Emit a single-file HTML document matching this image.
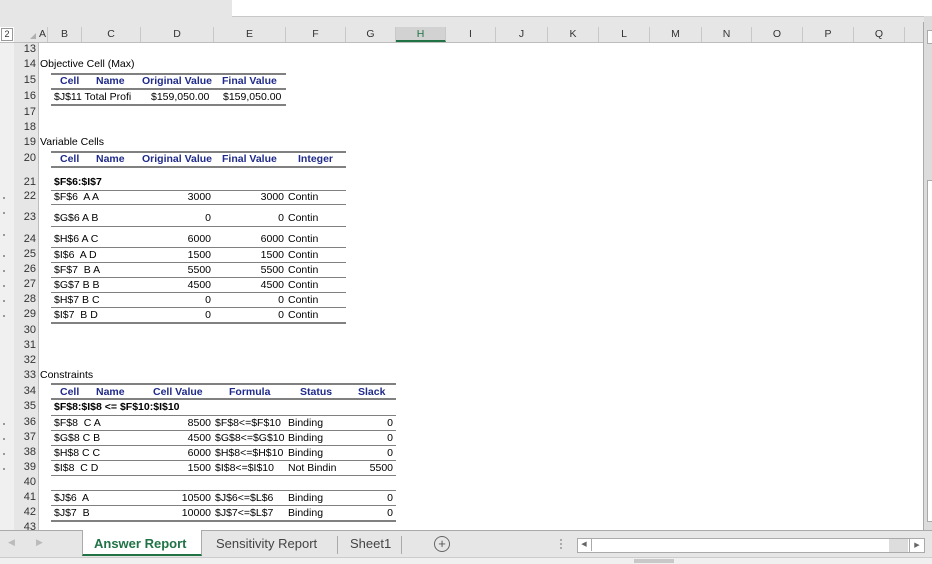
<!DOCTYPE html>
<html><head><style>
body{margin:0;width:932px;height:563px;position:relative;overflow:hidden;background:#fff;font-family:"Liberation Sans",sans-serif;font-size:10.5px;color:#000}
.a{position:absolute;white-space:nowrap}
.ch{position:absolute;top:27px;height:15px;line-height:15px;text-align:center;font-size:10.5px;color:#333;border-right:1px solid #c8c8c8;background:#e6e6e6}
.rn{position:absolute;left:14px;width:22px;text-align:right;font-size:11px;color:#333}
.hd{color:#1f2a8a;font-weight:bold}
.thk{position:absolute;height:2px;background:#808080}
.thn{position:absolute;height:1px;background:#808080}
.r{text-align:right}
</style></head><body>
<div class="a" style="left:0;top:0;width:932px;height:27px;background:#e6e6e6"></div>
<div class="a" style="left:232px;top:0;width:700px;height:16px;background:#fff;border-bottom:1px solid #c8c8c8"></div>
<div class="a" style="left:1px;top:28px;width:10px;height:11px;border:1px solid #999;background:#fff;font-size:9px;line-height:11px;text-align:center;color:#333">2</div>
<div class="a" style="left:14px;top:27px;width:24px;height:15px;background:#e6e6e6;border-right:1px solid #c8c8c8"></div>
<div class="a" style="left:30px;top:33px;width:0;height:0;border-left:6px solid transparent;border-bottom:6px solid #b0b0b0"></div>
<div class="ch" style="left:38px;width:9px">A</div>
<div class="ch" style="left:48px;width:33px">B</div>
<div class="ch" style="left:82px;width:58px">C</div>
<div class="ch" style="left:141px;width:72px">D</div>
<div class="ch" style="left:214px;width:71px">E</div>
<div class="ch" style="left:286px;width:59px">F</div>
<div class="ch" style="left:346px;width:49px">G</div>
<div class="ch" style="left:396px;width:49px;background:#d2d2d2;border-bottom:2px solid #217346;height:13px;color:#217346">H</div>
<div class="ch" style="left:446px;width:49px">I</div>
<div class="ch" style="left:496px;width:51px">J</div>
<div class="ch" style="left:548px;width:50px">K</div>
<div class="ch" style="left:599px;width:50px">L</div>
<div class="ch" style="left:650px;width:51px">M</div>
<div class="ch" style="left:702px;width:49px">N</div>
<div class="ch" style="left:752px;width:50px">O</div>
<div class="ch" style="left:803px;width:50px">P</div>
<div class="ch" style="left:854px;width:50px">Q</div>
<div class="ch" style="left:905px;width:18px;border-right:none"></div>
<div class="a" style="left:0;top:42px;width:923px;height:1px;background:#bdbdbd"></div>
<div class="a" style="left:0;top:43px;width:14px;height:487px;background:#f0f0f0"></div>
<div class="a" style="left:14px;top:43px;width:24px;height:487px;background:#e6e6e6;border-right:1px solid #bdbdbd"></div>
<!-- right scrollbar -->
<div class="a" style="left:923px;top:22px;width:1px;height:508px;background:#aaa"></div>
<div class="a" style="left:924px;top:16px;width:8px;height:514px;background:#dcdcdc"></div>
<div class="a" style="left:927px;top:30px;width:5px;height:12px;background:#fff;border:1px solid #aaa;border-right:none"></div>
<div class="a" style="left:927px;top:180px;width:5px;height:340px;background:#fff;border:1px solid #aaa;border-right:none"></div>

<div class="rn" style="top:43px">13</div><div class="rn" style="top:58px">14</div><div class="rn" style="top:74px">15</div><div class="rn" style="top:90px">16</div><div class="rn" style="top:106px">17</div><div class="rn" style="top:121px">18</div><div class="rn" style="top:136px">19</div><div class="rn" style="top:152px">20</div><div class="rn" style="top:176px">21</div><div class="rn" style="top:190px">22</div><div class="rn" style="top:211px">23</div><div class="rn" style="top:233px">24</div><div class="rn" style="top:248px">25</div><div class="rn" style="top:263px">26</div><div class="rn" style="top:278px">27</div><div class="rn" style="top:293px">28</div><div class="rn" style="top:308px">29</div><div class="rn" style="top:324px">30</div><div class="rn" style="top:339px">31</div><div class="rn" style="top:354px">32</div><div class="rn" style="top:369px">33</div><div class="rn" style="top:385px">34</div><div class="rn" style="top:400px">35</div><div class="rn" style="top:416px">36</div><div class="rn" style="top:431px">37</div><div class="rn" style="top:446px">38</div><div class="rn" style="top:461px">39</div><div class="rn" style="top:476px">40</div><div class="rn" style="top:491px">41</div><div class="rn" style="top:506px">42</div><div class="rn" style="top:521px">43</div>
<div class="a" style="left:3px;top:197px;width:2px;height:2px;background:#999;box-shadow:0 -2px 0 transparent,0 15px #999,0 22px transparent,0 37px #999,0 58px #999,0 73px #999,0 88px #999,0 103px #999,0 118px #999"></div>
<div class="a" style="left:3px;top:423px;width:2px;height:2px;background:#999;box-shadow:0 15px #999,0 30px #999,0 45px #999"></div>

<!-- Objective -->
<div class="a" style="left:40px;top:58px">Objective Cell (Max)</div>
<div class="thk" style="left:51px;top:73px;width:235px"></div>
<div class="a hd" style="left:60px;top:75px">Cell</div><div class="a hd" style="left:96px;top:75px">Name</div><div class="a hd" style="left:142px;top:75px">Original Value</div><div class="a hd" style="left:222px;top:75px">Final Value</div>
<div class="thk" style="left:51px;top:88px;width:235px"></div>
<div class="a" style="left:54px;top:91px">$J$11 Total Profi</div><div class="a" style="left:151px;top:91px">$159,050.00</div><div class="a" style="left:223px;top:91px">$159,050.00</div>
<div class="thk" style="left:51px;top:104px;width:235px"></div>

<!-- Variables -->
<div class="a" style="left:40px;top:136px">Variable Cells</div>
<div class="thk" style="left:51px;top:151px;width:295px"></div>
<div class="a hd" style="left:60px;top:153px">Cell</div><div class="a hd" style="left:96px;top:153px">Name</div><div class="a hd" style="left:142px;top:153px">Original Value</div><div class="a hd" style="left:222px;top:153px">Final Value</div><div class="a hd" style="left:298px;top:153px">Integer</div>
<div class="thk" style="left:51px;top:166px;width:295px"></div>
<div class="a" style="left:54px;top:176px;font-weight:bold">$F$6:$I$7</div>
<div class="thn" style="left:51px;top:190px;width:295px"></div>
<div class="thn" style="left:51px;top:204px;width:295px"></div>
<div class="thn" style="left:51px;top:226px;width:295px"></div>
<div class="thn" style="left:51px;top:247px;width:295px"></div>
<div class="thn" style="left:51px;top:262px;width:295px"></div>
<div class="thn" style="left:51px;top:277px;width:295px"></div>
<div class="thn" style="left:51px;top:292px;width:295px"></div>
<div class="thn" style="left:51px;top:307px;width:295px"></div>
<div class="thk" style="left:51px;top:322px;width:295px"></div>
<div class="a" style="left:54px;top:191px">$F$6&nbsp; A A</div><div class="a r" style="left:150px;width:61px;top:191px">3000</div><div class="a r" style="left:220px;width:64px;top:191px">3000</div><div class="a" style="left:288px;top:191px">Contin</div>
<div class="a" style="left:54px;top:212px">$G$6 A B</div><div class="a r" style="left:150px;width:61px;top:212px">0</div><div class="a r" style="left:220px;width:64px;top:212px">0</div><div class="a" style="left:288px;top:212px">Contin</div>
<div class="a" style="left:54px;top:233px">$H$6 A C</div><div class="a r" style="left:150px;width:61px;top:233px">6000</div><div class="a r" style="left:220px;width:64px;top:233px">6000</div><div class="a" style="left:288px;top:233px">Contin</div>
<div class="a" style="left:54px;top:249px">$I$6&nbsp; A D</div><div class="a r" style="left:150px;width:61px;top:249px">1500</div><div class="a r" style="left:220px;width:64px;top:249px">1500</div><div class="a" style="left:288px;top:249px">Contin</div>
<div class="a" style="left:54px;top:264px">$F$7&nbsp; B A</div><div class="a r" style="left:150px;width:61px;top:264px">5500</div><div class="a r" style="left:220px;width:64px;top:264px">5500</div><div class="a" style="left:288px;top:264px">Contin</div>
<div class="a" style="left:54px;top:279px">$G$7 B B</div><div class="a r" style="left:150px;width:61px;top:279px">4500</div><div class="a r" style="left:220px;width:64px;top:279px">4500</div><div class="a" style="left:288px;top:279px">Contin</div>
<div class="a" style="left:54px;top:294px">$H$7 B C</div><div class="a r" style="left:150px;width:61px;top:294px">0</div><div class="a r" style="left:220px;width:64px;top:294px">0</div><div class="a" style="left:288px;top:294px">Contin</div>
<div class="a" style="left:54px;top:309px">$I$7&nbsp; B D</div><div class="a r" style="left:150px;width:61px;top:309px">0</div><div class="a r" style="left:220px;width:64px;top:309px">0</div><div class="a" style="left:288px;top:309px">Contin</div>

<!-- Constraints -->
<div class="a" style="left:40px;top:369px">Constraints</div>
<div class="thk" style="left:51px;top:383px;width:345px"></div>
<div class="a hd" style="left:60px;top:386px">Cell</div><div class="a hd" style="left:96px;top:386px">Name</div><div class="a hd" style="left:153px;top:386px">Cell Value</div><div class="a hd" style="left:229px;top:386px">Formula</div><div class="a hd" style="left:300px;top:386px">Status</div><div class="a hd" style="left:358px;top:386px">Slack</div>
<div class="thk" style="left:51px;top:398px;width:345px"></div>
<div class="a" style="left:54px;top:401px;font-weight:bold">$F$8:$I$8 &lt;= $F$10:$I$10</div>
<div class="thn" style="left:51px;top:415px;width:345px"></div>
<div class="thn" style="left:51px;top:430px;width:345px"></div>
<div class="thn" style="left:51px;top:445px;width:345px"></div>
<div class="thn" style="left:51px;top:460px;width:345px"></div>
<div class="thn" style="left:51px;top:475px;width:345px"></div>
<div class="thn" style="left:51px;top:490px;width:345px"></div>
<div class="thn" style="left:51px;top:505px;width:345px"></div>
<div class="thk" style="left:51px;top:520px;width:345px"></div>
<div class="a" style="left:54px;top:417px">$F$8&nbsp; C A</div><div class="a r" style="left:150px;width:61px;top:417px">8500</div><div class="a" style="left:215px;top:417px">$F$8&lt;=$F$10</div><div class="a" style="left:288px;top:417px">Binding</div><div class="a r" style="left:350px;width:43px;top:417px">0</div>
<div class="a" style="left:54px;top:432px">$G$8 C B</div><div class="a r" style="left:150px;width:61px;top:432px">4500</div><div class="a" style="left:215px;top:432px">$G$8&lt;=$G$10</div><div class="a" style="left:288px;top:432px">Binding</div><div class="a r" style="left:350px;width:43px;top:432px">0</div>
<div class="a" style="left:54px;top:447px">$H$8 C C</div><div class="a r" style="left:150px;width:61px;top:447px">6000</div><div class="a" style="left:215px;top:447px">$H$8&lt;=$H$10</div><div class="a" style="left:288px;top:447px">Binding</div><div class="a r" style="left:350px;width:43px;top:447px">0</div>
<div class="a" style="left:54px;top:462px">$I$8&nbsp; C D</div><div class="a r" style="left:150px;width:61px;top:462px">1500</div><div class="a" style="left:215px;top:462px">$I$8&lt;=$I$10</div><div class="a" style="left:288px;top:462px">Not Bindin</div><div class="a r" style="left:350px;width:43px;top:462px">5500</div>
<div class="a" style="left:54px;top:492px">$J$6&nbsp; A</div><div class="a r" style="left:150px;width:61px;top:492px">10500</div><div class="a" style="left:215px;top:492px">$J$6&lt;=$L$6</div><div class="a" style="left:288px;top:492px">Binding</div><div class="a r" style="left:350px;width:43px;top:492px">0</div>
<div class="a" style="left:54px;top:507px">$J$7&nbsp; B</div><div class="a r" style="left:150px;width:61px;top:507px">10000</div><div class="a" style="left:215px;top:507px">$J$7&lt;=$L$7</div><div class="a" style="left:288px;top:507px">Binding</div><div class="a r" style="left:350px;width:43px;top:507px">0</div>

<!-- tab bar -->
<div class="a" style="left:0;top:530px;width:932px;height:33px;background:#e6e6e6;border-top:1px solid #aaa"></div>
<div class="a" style="left:8px;top:537px;color:#bbb;font-size:9px">◀</div>
<div class="a" style="left:36px;top:537px;color:#bbb;font-size:9px">▶</div>
<div class="a" style="left:82px;top:530px;width:118px;height:24px;background:#fff;border-left:1px solid #aaa;border-right:1px solid #aaa;border-bottom:2px solid #217346"></div>
<div class="a" style="left:94px;top:536px;font-size:13px;font-weight:bold;color:#217346">Answer Report</div>
<div class="a" style="left:216px;top:536px;font-size:13px;color:#444">Sensitivity Report</div>
<div class="a" style="left:337px;top:536px;width:1px;height:18px;background:#aaa"></div>
<div class="a" style="left:350px;top:536px;font-size:13px;color:#444">Sheet1</div>
<div class="a" style="left:401px;top:536px;width:1px;height:18px;background:#aaa"></div>
<div class="a" style="left:434px;top:536px;width:14px;height:14px;border:1px solid #666;border-radius:50%;text-align:center;line-height:14px;font-size:13px;color:#555">+</div>
<div class="a" style="left:560px;top:539px;width:2px;height:2px;background:#aaa;box-shadow:0 4px #aaa,0 8px #aaa"></div>
<div class="a" style="left:577px;top:538px;width:331px;height:13px;border:1px solid #aaa;background:#fff"></div>
<div class="a" style="left:577px;top:538px;width:14px;height:13px;border-right:1px solid #aaa;font-size:7px;line-height:13px;text-align:center;color:#666">◀</div>
<div class="a" style="left:889px;top:539px;width:19px;height:13px;background:#ddd"></div>
<div class="a" style="left:909px;top:538px;width:14px;height:13px;border:1px solid #aaa;background:#fff;font-size:7px;line-height:13px;text-align:center;color:#666">▶</div>
<div class="a" style="left:0;top:557px;width:932px;height:6px;background:#f0f0f0;border-top:1px solid #ccc"></div>
<div class="a" style="left:634px;top:559px;width:40px;height:4px;background:#c8c8c8"></div>
</body></html>
